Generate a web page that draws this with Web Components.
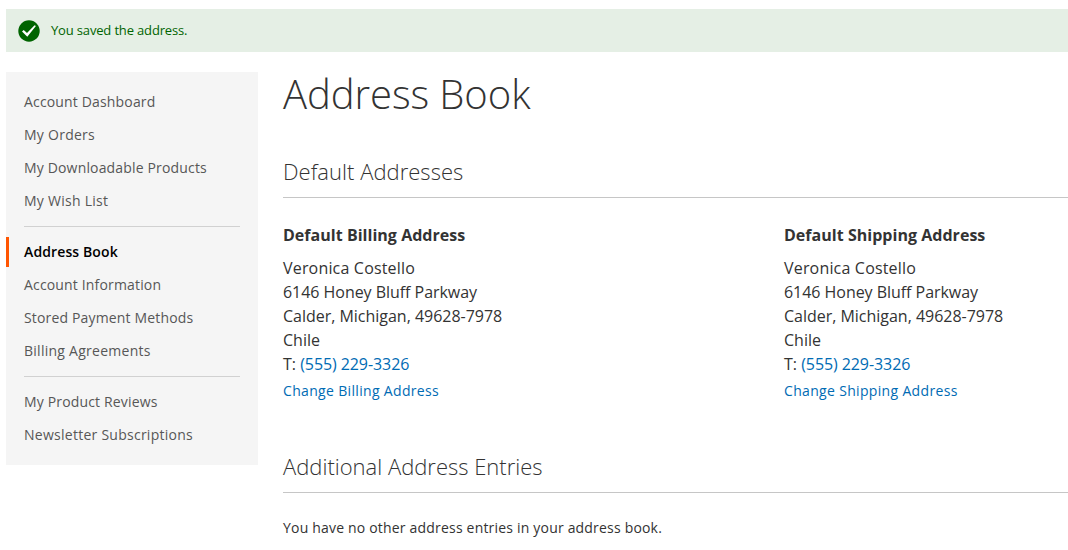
<!DOCTYPE html>
<html lang="en"><head><meta charset="utf-8"><title>Address Book</title>
<style>
html,body{margin:0;height:550px;overflow:hidden;background:#fff}
body{font-family:"Open Sans","Noto Sans",sans-serif;font-size:14px;color:#333}
</style></head><body>
<account-page></account-page>
<script>
const define=(name,html)=>{
  const t=document.createElement('template');t.innerHTML=html;
  customElements.define(name,class extends HTMLElement{
    constructor(){super();this.attachShadow({mode:'open'}).append(t.content.cloneNode(true));}
  });
};
define('success-message',`<style>
:host{display:flex;align-items:center;box-sizing:border-box;height:43px;padding:0 12px;gap:11px;background:#e5efe5;color:#006400;font-size:13px;line-height:18px;letter-spacing:-.16px}
svg{display:block;width:22px;height:22px;margin-top:1px}
span{margin-bottom:1px}
</style><svg viewBox="0 0 22 22"><circle cx="11" cy="11" r="10.7" fill="#006400"/><path d="M4 11.4l1.7-1.5 3.3 3.2 7.6-7.9 1.3.7-8.6 10.8z" fill="#fff"/></svg><span><slot></slot></span>`);
define('nav-item',`<style>
:host{display:block;box-sizing:border-box;height:30px;margin-bottom:3px;padding:5px 18px 5px 15px;border-left:3px solid transparent;font-size:14px;line-height:20px;color:#575757;white-space:nowrap;letter-spacing:.16px}
:host([current]){border-color:#ff5501;color:#000;font-weight:600;letter-spacing:.12px}
:host([wide]){letter-spacing:.26px}
</style><slot></slot>`);
define('nav-divider',`<style>:host{display:block;height:1px;margin:10px 18px;background:#d1d1d1}</style>`);
define('account-nav',`<style>:host{display:block;box-sizing:border-box;width:252px;height:393px;padding-top:15px;background:#f5f5f5}</style><slot></slot>`);
define('section-title',`<style>:host{display:block;box-sizing:border-box;height:41px;border-bottom:1px solid #c6c6c6;font-size:22px;line-height:28px;font-weight:300;color:#333}</style><slot></slot>`);
define('address-card',`<style>
:host{display:block;font-size:16px;line-height:24px;color:#333}
h3{margin:0 0 9px;font-size:16px;line-height:24px;font-weight:700;letter-spacing:.03px}
.action{font-size:14px;line-height:20px;margin-top:5px;color:#006bb4;letter-spacing:.33px}
</style><h3><slot name="title"></slot></h3><slot></slot><div class="action"><slot name="action"></slot></div>`);
define('account-page',`<style>
:host{display:block;padding:9px 0 0 6px}
.columns{display:flex;gap:25px;margin-top:20px}
account-nav{flex:none}
main{flex:1;min-width:0}
h1{margin:0;font-size:40px;line-height:44px;font-weight:300;color:#333;letter-spacing:-.06px}
.first{margin-top:41px;letter-spacing:.03px}
.cards{display:grid;grid-template-columns:501px 1fr;margin-top:25px}
.second{margin-top:51px}
.name{letter-spacing:.18px}
.street{letter-spacing:-.04px}
.city{letter-spacing:-.02px}
.phone{color:#006bb4;letter-spacing:-.08px}
p{margin:25px 0 0;line-height:20px;letter-spacing:.19px}
</style>
<success-message>You saved the address.</success-message>
<div class="columns"><account-nav>
<nav-item>Account Dashboard</nav-item><nav-item wide>My Orders</nav-item><nav-item>My Downloadable Products</nav-item><nav-item wide>My Wish List</nav-item>
<nav-divider></nav-divider>
<nav-item current>Address Book</nav-item><nav-item>Account Information</nav-item><nav-item>Stored Payment Methods</nav-item><nav-item wide>Billing Agreements</nav-item>
<nav-divider></nav-divider>
<nav-item>My Product Reviews</nav-item><nav-item wide>Newsletter Subscriptions</nav-item>
</account-nav><main><h1>Address Book</h1>
<section-title class="first">Default Addresses</section-title>
<div class="cards">
<address-card><span slot="title">Default Billing Address</span><div class="name">Veronica Costello</div><div class="street">6146 Honey Bluff Parkway</div><div class="city">Calder, Michigan, 49628-7978</div><div>Chile</div><div>T: <span class="phone">(555) 229-3326</span></div><span slot="action">Change Billing Address</span></address-card>
<address-card><span slot="title">Default Shipping Address</span><div class="name">Veronica Costello</div><div class="street">6146 Honey Bluff Parkway</div><div class="city">Calder, Michigan, 49628-7978</div><div>Chile</div><div>T: <span class="phone">(555) 229-3326</span></div><span slot="action">Change Shipping Address</span></address-card>
</div>
<section-title class="second">Additional Address Entries</section-title>
<p>You have no other address entries in your address book.</p>
</main></div>`);
</script></body></html>
